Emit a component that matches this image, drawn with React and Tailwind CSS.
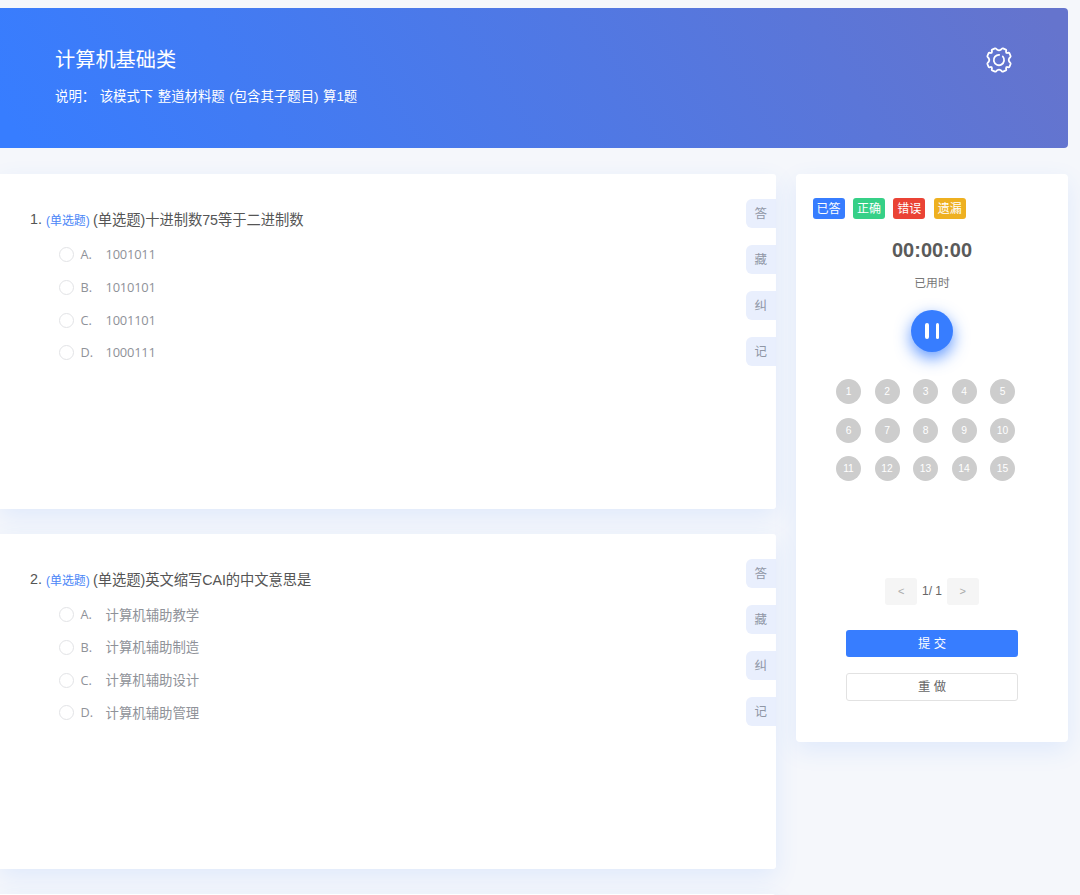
import { useState } from "react";
import clsx from "clsx";

const QUESTIONS = [
  {
    id: 1,
    title: "(单选题)十进制数75等于二进制数",
    options: ["1001011", "1010101", "1001101", "1000111"],
  },
  {
    id: 2,
    title: "(单选题)英文缩写CAI的中文意思是",
    options: ["计算机辅助教学", "计算机辅助制造", "计算机辅助设计", "计算机辅助管理"],
  },
];

const ACTIONS = ["答", "藏", "纠", "记"];

const LEGEND = [
  { label: "已答", color: "bg-[#377dff]" },
  { label: "正确", color: "bg-[#36d087]" },
  { label: "错误", color: "bg-[#ea4335]" },
  { label: "遗漏", color: "bg-[#eeb020]" },
];

const CARD = "bg-white shadow-[0_8px_24px_rgba(55,125,255,0.11)]";

function GearIcon() {
  return (
    <svg
      width="28"
      height="28"
      viewBox="-14 -14 28 28"
      fill="none"
      stroke="currentColor"
      strokeWidth="1.8"
      strokeLinecap="round"
      strokeLinejoin="round"
    >
      <path d="M-1.7-10.2Q0-9.2 1.7-10.2L2.9-11.3Q3.4-11.8 4-11.6L6.8-10.4Q7.4-10.1 7.3-9.4L7-8.3Q7-7 8.3-7L9.4-7.3Q10.1-7.4 10.4-6.8L11.6-4Q11.8-3.4 11.3-2.9L10.2-1.7Q9.2 0 10.2 1.7L11.3 2.9Q11.8 3.4 11.6 4L10.4 6.8Q10.1 7.4 9.4 7.3L8.3 7Q7 7 7 8.3L7.3 9.4Q7.4 10.1 6.8 10.4L4 11.6Q3.4 11.8 2.9 11.3L1.7 10.2Q0 9.2-1.7 10.2L-2.9 11.3Q-3.4 11.8-4 11.6L-6.8 10.4Q-7.4 10.1-7.3 9.4L-7 8.3Q-7 7-8.3 7L-9.4 7.3Q-10.1 7.4-10.4 6.8L-11.6 4Q-11.8 3.4-11.3 2.9L-10.2 1.7Q-9.2 0-10.2-1.7L-11.3-2.9Q-11.8-3.4-11.6-4L-10.4-6.8Q-10.1-7.4-9.4-7.3L-8.3-7Q-7-7-7-8.3L-7.3-9.4Q-7.4-10.1-6.8-10.4L-4-11.6Q-3.4-11.8-2.9-11.3Z" />
      <path d="M3.8-3.5A5.2 5.2 0 1 1 .2-5.2" />
    </svg>
  );
}

function QuestionCard({ question }) {
  const [picked, setPicked] = useState(null);

  return (
    <section className={clsx(CARD, "flex h-[335px] justify-between rounded-r-[3px]")}>
      <div className="pt-[34px] pl-[30px]">
        <h2 className="flex h-6 items-center text-[14.3px] tracking-[-0.05px] whitespace-pre text-[#555]">
          <span className="w-4">{question.id}.</span>
          <span className="w-[47px] pt-px text-[12px] text-[#4a86f7]">(单选题)</span>
          <span className="pt-px">{question.title}</span>
        </h2>
        <ul className="mt-[6.5px] pl-[29px] font-['Open_Sans','Noto_Sans_CJK_SC',sans-serif] text-[#8f9299]">
          {question.options.map((text, i) => (
            <li key={text} className="flex h-[32.7px] items-center">
              <button
                onClick={() => setPicked(i)}
                className={clsx(
                  "mr-[6.5px] size-[15px] rounded-full border",
                  picked === i ? "border-[#377dff] bg-[#377dff]" : "border-[#e2e3e6]"
                )}
              />
              <span className="w-[25px] text-[12.7px]">{"ABCD"[i]}.</span>
              <span
                className={clsx(
                  /^\d/.test(text) ? "text-[12.9px] tracking-[-0.2px]" : "text-[13.4px]"
                )}
              >
                {text}
              </span>
            </li>
          ))}
        </ul>
      </div>
      <div className="flex flex-col gap-[17px] pt-[25px]">
        {ACTIONS.map((a) => (
          <button
            key={a}
            className="h-[29px] w-[29.5px] rounded-l-md bg-[#e9effd] pt-px text-[12.5px] text-[#9097a6]"
          >
            {a}
          </button>
        ))}
      </div>
    </section>
  );
}

function SidePanel() {
  return (
    <aside className={clsx(CARD, "flex h-[568px] w-[272px] flex-col items-center rounded")}>
      <div className="mt-[24px] flex gap-[8.4px] self-start pl-[16.5px]">
        {LEGEND.map((item) => (
          <span
            key={item.label}
            className={clsx(
              "flex h-[21px] w-8 items-center justify-center rounded-[3px] text-[12px] text-white",
              item.color
            )}
          >
            {item.label}
          </span>
        ))}
      </div>
      <div className="mt-[16px] h-[30px] text-[20px] leading-[30px] font-bold text-[#5a5a5a]">00:00:00</div>
      <div className="mt-[8px] h-5 text-[11.8px] leading-5 text-[#777]">已用时</div>
      <button className="mt-[17px] flex size-[42px] shrink-0 items-center justify-center gap-[7px] rounded-full bg-[#377dff] shadow-[0_6px_16px_rgba(55,125,255,0.8)]">
        <span className="h-4 w-[3.5px] rounded-full bg-white" />
        <span className="h-4 w-[3.5px] rounded-full bg-white" />
      </button>
      <div className="mt-[27px] mr-[13px] grid h-[198.5px] grid-cols-5 content-start gap-x-[13.5px] gap-y-[13.5px]">
        {Array.from({ length: 15 }, (_, i) => (
          <button key={i} className="size-[25px] rounded-full bg-[#cdcdcd] text-[10.3px] leading-[25px] text-white">
            {i + 1}
          </button>
        ))}
      </div>
      <div className="flex h-[27px] items-center text-[12px] text-[#666]">
        <button className="h-full w-8 rounded-[3px] bg-[#f5f5f5] text-[11px] text-[#aaa]">&lt;</button>
        <span className="w-[29.5px] text-center">1/ 1</span>
        <button className="h-full w-8 rounded-[3px] bg-[#f5f5f5] text-[11px] text-[#aaa]">&gt;</button>
      </div>
      <button className="mt-[25.5px] h-[27px] w-[172px] rounded-[3px] bg-[#377dff] pt-px text-[12.3px] text-white">
        提 交
      </button>
      <button className="mt-[16px] h-[28px] w-[172px] rounded-[3px] border border-[#e2e2e2] pt-px text-[12.3px] text-[#666]">
        重 做
      </button>
    </aside>
  );
}

export default function App() {
  return (
    <div className="h-[895px] overflow-hidden bg-[#f5f7fb] pt-2 pr-3 font-['Liberation_Sans','Noto_Sans_CJK_SC',sans-serif]">
      <header className="flex h-[140px] justify-between rounded-r bg-[linear-gradient(60deg,#377dff_2%,#6574cd_98%)] pr-[55px] pl-[55px] text-white">
        <div className="pt-[37px]">
          <h1 className="text-[20.2px] leading-[30px]">计算机基础类</h1>
          <p className="mt-[12px] text-[13.4px] leading-5 [word-spacing:0.8px] whitespace-pre">
            说明： 该模式下 整道材料题 (包含其子题目) 算1题
          </p>
        </div>
        <button className="mt-[38px] size-7">
          <GearIcon />
        </button>
      </header>
      <main className="mt-[26px] flex items-start gap-[20.5px]">
        <div className="flex flex-1 flex-col gap-[25px]">
          {QUESTIONS.map((q) => (
            <QuestionCard key={q.id} question={q} />
          ))}
          <div className={clsx(CARD, "h-8 rounded-tr")} />
        </div>
        <SidePanel />
      </main>
    </div>
  );
}
